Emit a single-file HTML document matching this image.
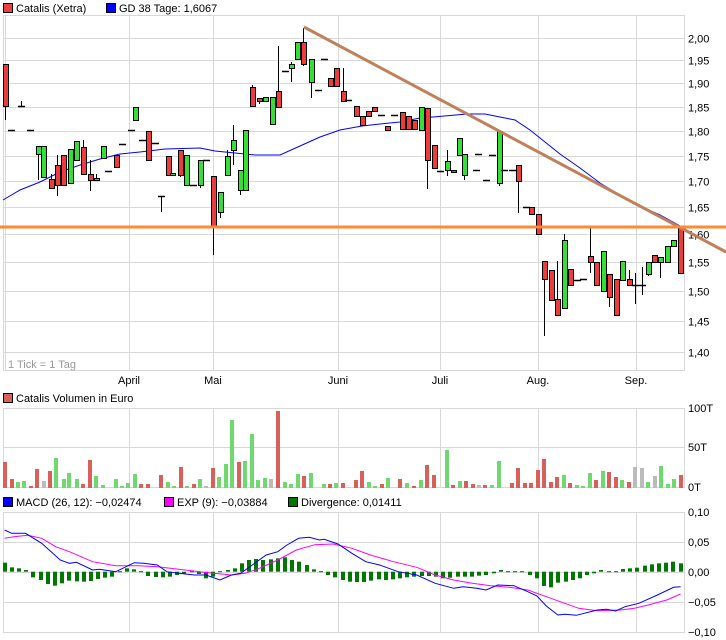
<!DOCTYPE html>
<html><head><meta charset="utf-8"><style>
html,body{margin:0;padding:0;background:#fff;width:726px;height:640px;overflow:hidden}
svg{display:block}
text{font-family:"Liberation Sans",Arial,sans-serif;font-size:11px;fill:#000}
</style></head><body>
<svg id="s" width="726" height="640" xmlns="http://www.w3.org/2000/svg"></svg>
<script>
var o=[];
function L(x1,y1,x2,y2,c,w){o.push('<line x1="'+x1+'" y1="'+y1+'" x2="'+x2+'" y2="'+y2+'" stroke="'+c+'" stroke-width="'+(w||1)+'"/>');}
function R(x,y,w,h,f,s){o.push('<rect x="'+x+'" y="'+y+'" width="'+w+'" height="'+h+'" fill="'+f+'"'+(s?' stroke="'+s+'" stroke-width="1"':'')+'/>');}
function T(x,y,t,a,c){o.push('<text x="'+x+'" y="'+y+'"'+(a?' text-anchor="'+a+'"':'')+(c?' style="fill:'+c+'"':'')+'>'+t+'</text>');}
var G='#d8d8d8', VX=[129,213,338,440,538,636];
R(3.5,3.5,9,9,'#ee4040','#000');T(16,12,'Catalis (Xetra)');
R(106.5,3.5,9,9,'#0000ff','#000');T(119,12,'GD 38 Tage: 1,6067');
var ylab=['2,00','1,95','1,90','1,85','1,80','1,75','1,70','1,65','1,60','1,55','1,50','1,45','1,40'];
for(var i=0;i<13;i++){var p=2-i*0.05;var y=Math.round(38+880*Math.log(2/p))+.5;L(3,y,684,y,G);T(688,y+4,ylab[i]);}
L(3,15.5,684,15.5,G);L(3,370.5,684,370.5,G);L(3.5,15,3.5,371,G);L(5.5,15,5.5,371,G);L(684.5,15,684.5,371,G);
VX.forEach(function(x){L(x+.5,15,x+.5,371,G);});
T(8,368,'1 Tick = 1 Tag','','#999');
var ml=['April','Mai','Juni','Juli','Aug.','Sep.'];
VX.forEach(function(x,i){T(x,384,ml[i],'middle');});
var ma=[[3,200],[20,190],[40,182],[60,172],[80,165],[100,159],[120,154],[140,152],[165,149],[200,148],[215,151],[235,153],[255,155],[280,155],[300,146],[320,137],[340,130],[362,126],[380,124],[400,122],[420,118],[433,117],[467,114],[485,114],[500,117],[515,120],[530,130],[545,142],[560,154],[580,168],[600,183],[620,195],[640,206],[660,215],[680,226]];
o.push('<polyline fill="none" stroke="#0000ff" stroke-width="1" points="'+ma.map(function(p){return p.join(',')}).join(' ')+'"/>');
var C=[[5,64,106,'r',64,120],[21,106,106,'d',101,106],[11,130,130,'d'],[30,130,130,'d'],
[38,146,154,'g',146,180],[43,146,177,'g'],[51,179,188,'r',174,188],[57,165,185,'r',155,196],[63,155,185,'r',155,186],[70,149,183,'g'],[76,141,160,'g'],[83,147,174,'r',140,174],[90,174,180,'r',160,191],[96,178,180,'g',174,180],[103,146,158,'g'],[108,171,171,'d'],[116,155,167,'r'],[122,144,144,'d'],[131,130,130,'d'],[135,107,120,'g'],[142,140,140,'d'],[148,131,160,'r'],[155,143,143,'d'],[161,196,196,'d',196,212],[168,156,175,'r'],[172,173,175,'g'],[180,150,175,'r',150,177],[186,155,185,'g'],[193,185,185,'d'],[200,160,185,'g',160,188],[206,160,160,'d'],[213,176,227,'r',176,255],[220,192,212,'g',192,218],[227,156,175,'g',150,175],[233,140,150,'g',125,165],[240,170,190,'g',170,195],[245,130,190,'g'],
[252,87,106,'r',85,106],[259,98,101,'r',98,104],[265,97,101,'g'],[272,97,124,'g'],[278,91,107,'r',46,107],[285,71,71,'d'],[291,64,68,'g',62,82],[297,42,59,'g'],[303,42,64,'r',28,66],[311,59,82,'g',59,98],[318,90,90,'d'],[324,59,59,'d'],[330,78,86,'r'],[336,68,86,'r'],[343,91,101,'r',68,101],[348,100,100,'d'],[356,106,116,'r'],[362,116,125,'r'],[368,111,116,'r'],[374,107,111,'r'],[381,115,115,'d'],[387,126,130,'r'],[394,115,115,'d'],[402,112,129,'r'],[408,116,129,'r'],[414,120,129,'r'],[421,107,130,'g'],[427,108,160,'r',108,189],[434,145,168,'r'],[440,171,171,'d'],[447,161,170,'g',150,176],[453,170,172,'r'],[459,138,155,'g'],[464,154,175,'g',154,180],[476,170,170,'d'],[478,154,154,'d'],[486,180,180,'d'],[492,155,155,'d'],[499,131,183,'g',131,186],[504,170,170,'d'],[512,170,170,'d'],[518,165,181,'r',165,213],[526,207,207,'d'],[531,207,214,'r'],[538,214,234,'r',214,235],
[544,261,279,'r',261,336],[551,270,300,'r'],[557,299,315,'r',261,315],[564,240,308,'g',234,309],[570,269,285,'r'],[577,280,280,'d'],[583,279,279,'d'],[590,256,262,'r',228,273],[596,262,285,'r'],[603,251,291,'g'],[609,274,297,'r',274,307],[616,279,315,'r'],[622,261,280,'g'],[629,279,285,'r',270,285],[635,285,285,'d',273,304],[642,285,285,'d',267,295],[648,262,274,'g',262,276],[654,255,262,'r'],[660,257,262,'g',257,278],[667,246,262,'g'],[673,240,246,'g'],[680,228,273,'r']];
C.forEach(function(c){var x=c[0],wt=c[4]||c[1],wb=c[5]||c[2];
 if(wt<c[1]||wb>c[2])L(x+.5,wt,x+.5,wb,'#000');
 if(c[3]=='d'){L(x-3,c[1]+.5,x+4,c[1]+.5,'#000',1.5);}
 else R(x-2+.5,c[1]+.5,5,Math.max(1,c[2]-c[1]),c[3]=='r'?'#ee3b3b':'#33e033','#000');});
L(304,27,726,252,'#c0805a',3);
L(0,227,726,227,'#ff8a30',3);
R(3.5,393.5,9,9,'#d9605a','#000');T(16,402,'Catalis Volumen in Euro');
[408,447,487].forEach(function(y,i){L(3,y+.5,684,y+.5,G);T(688,y+4,['100T','50T','0T'][i]);});
L(3.5,408,3.5,488,G);L(684.5,408,684.5,488,G);
VX.forEach(function(x){L(x+.5,408,x+.5,488,G);});
var V=[[10,245,'r'],[25,297,'r'],[38,305,'g'],[52,303,'g'],[66,318,'r'],[80,267,'r'],[94,303,'k'],[108,273,'r'],[122,234,'g'],[138,297,'g'],[150,279,'g'],[166,297,'g'],[180,312,'r'],[194,240,'r'],[207,288,'g'],[222,315,'g'],[250,297,'g'],[263,318,'g'],[277,309,'g'],[291,282,'g'],[305,312,'r'],[319,312,'r'],[347,285,'r'],[362,306,'g'],[376,318,'g'],[390,261,'r'],[404,318,'g'],[418,312,'r'],[432,297,'g'],[446,318,'k'],[460,264,'r'],[474,291,'g'],[488,252,'g'],[502,120,'g'],[516,246,'r'],[530,243,'g'],[544,162,'g'],[558,300,'g'],[572,294,'g'],[586,297,'k'],[600,93,'r'],[616,306,'g'],[629,312,'g'],[643,282,'g'],[656,288,'r'],[671,279,'g'],[699,312,'g'],[712,312,'r'],[726,309,'g'],[740,309,'r'],[769,300,'r'],[782,273,'r'],[797,306,'g'],[811,318,'g'],[825,312,'r'],[838,294,'g'],[865,297,'r'],[880,309,'g'],[894,318,'r'],[909,300,'g'],[922,255,'r'],[937,285,'r'],[965,210,'g'],[979,315,'r'],[993,303,'g'],[1006,303,'r'],[1021,312,'r'],[1034,315,'k'],[1048,315,'r'],[1062,315,'g'],[1077,243,'g'],[1105,309,'r'],[1119,264,'r'],[1134,309,'r'],[1148,309,'r'],[1162,270,'r'],[1175,237,'r'],[1190,306,'r'],[1203,291,'r'],[1218,285,'g'],[1231,309,'r'],[1246,315,'g'],[1259,318,'g'],[1274,279,'g'],[1287,300,'r'],[1302,273,'g'],[1316,276,'r'],[1330,291,'r'],[1344,300,'g'],[1358,306,'r'],[1372,261,'k'],[1386,264,'k'],[1400,306,'g'],[1414,288,'k'],[1428,258,'g'],[1442,312,'g'],[1456,297,'g'],[1470,285,'r']];
var K=2.16;
V.forEach(function(v){var x=Math.round(v[0]/K),t=Math.round(380+v[1]/3);R(x-2,t,4,488-t,{r:'#d9605a',g:'#6fd96f',k:'#bbbbbb'}[v[2]]);});
R(3.5,497.5,9,9,'#0000ff','#000');T(16,506,'MACD (26, 12): \u22120,02474');
R(164.5,497.5,9,9,'#ff00ff','#000');T(177,506,'EXP (9): \u22120,03884');
R(288.5,497.5,9,9,'#007700','#000');T(301,506,'Divergence: 0,01411');
var my=[512,542,572,602,632],mlab=['0,10','0,05','0,00','\u22120,05','\u22120,10'];
my.forEach(function(y,i){L(3,y+.5,684,y+.5,G);T(688,y+4,mlab[i]);});
L(3.5,512,3.5,633,G);L(684.5,512,684.5,633,G);
VX.forEach(function(x){L(x+.5,512,x+.5,633,G);});
var D=[548,562,565,570,592,600,612,617,610,602,604,605,603,597,593,590,575,565,568,575,588,591,592,590,585,582,578,582,595,590,575,570,565,550,540,537,540,538,535,532,540,545,555,568,575,585,592,600,605,606,606,602,598,600,598,595,592,590,588,588,590,595,593,590,590,590,587,585,580,570,575,575,578,585,595,618,622,608,605,600,595,585,580,570,575,578,567,565,563,557,553,550,548,545,550];
var n=D.length;
D.forEach(function(d,i){var X=10+i*(1460/(n-1));var x=Math.round(X/K),y=380+d/3,z=571.7;
 if(Math.abs(y-z)<1.2)R(x-2,z-0.5,4,1,'#007700');else R(x-2,Math.min(y,z),4,Math.abs(y-z),'#007700');});
function PL(a,c){o.push('<polyline fill="none" stroke="'+c+'" stroke-width="1" points="'+a.map(function(p){return (p[0]/K).toFixed(1)+','+(380+p[1]/3).toFixed(1)}).join(' ')+'"/>');}
PL([[10,475],[30,470],[60,466],[90,475],[120,500],[150,515],[200,545],[250,557],[300,557],[340,560],[400,570],[450,578],[500,585],[530,580],[560,565],[600,540],[640,510],[680,494],[720,492],[760,505],[800,525],[850,545],[900,562],[940,585],[980,600],[1020,610],[1060,617],[1100,622],[1140,630],[1180,650],[1210,665],[1250,685],[1290,692],[1340,690],[1370,685],[1400,675],[1440,660],[1470,642]],'#ff00ff');
PL([[10,450],[25,460],[55,460],[90,490],[130,540],[150,550],[165,547],[200,570],[215,568],[250,575],[290,548],[310,550],[340,555],[360,575],[400,582],[420,585],[445,585],[475,600],[500,585],[520,580],[545,555],[575,525],[600,515],[620,495],[645,475],[668,472],[690,480],[700,478],[730,492],[760,520],[790,545],[820,555],[860,575],[900,585],[940,610],[980,625],[1000,620],[1030,625],[1050,630],[1075,615],[1110,617],[1140,635],[1160,648],[1180,678],[1205,705],[1220,703],[1245,706],[1290,690],[1310,688],[1330,693],[1350,680],[1380,670],[1420,645],[1455,622],[1470,620]],'#0000ff');
document.getElementById('s').innerHTML=o.join('');
</script>
</body></html>
